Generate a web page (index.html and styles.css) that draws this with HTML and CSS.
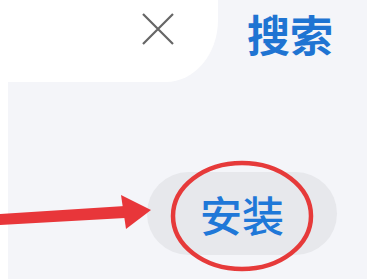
FILE: index.html
```html
<!DOCTYPE html>
<html lang="zh">
<head>
<meta charset="utf-8">
<link rel="stylesheet" href="styles.css">
</head>
<body>
<div class="page">
  <header class="topbar">
    <div class="field">
      <svg class="clear" width="34" height="34" viewBox="0 0 34 34">
        <path d="M2 2 L32 32 M32 2 L2 32" stroke="#666" stroke-width="2.2" fill="none"/>
      </svg>
    </div>
    <span class="search">搜索</span>
  </header>
  <section class="content">
    <button class="install">安装</button>
    <svg class="mark" width="367" height="197" viewBox="0 0 367 197">
      <ellipse cx="242" cy="134" rx="69" ry="53" fill="none" stroke="#e63a3a" stroke-width="4.5"/>
      <polygon points="0,132 125,124 125,136 0,143" fill="#e8363a"/>
      <polygon points="121,113 151,128 126,147" fill="#e8363a"/>
    </svg>
  </section>
</div>
</body>
</html>
```
FILE: styles.css
```css
html, body {
  margin: 0;
  padding: 0;
}
body {
  background: #f4f5f9;
  font-family: "Noto Sans CJK SC", "Noto Sans", sans-serif;
  width: 367px;
  height: 279px;
  overflow: hidden;
}
.page {
  display: flex;
  flex-direction: column;
  height: 279px;
}
.topbar {
  height: 82px;
  display: flex;
  align-items: flex-start;
}
.field {
  width: 218px;
  height: 142px;
  margin-top: -60px;
  background: #fff;
  border-radius: 0 52px 52px 0 / 0 62px 62px 0;
  display: flex;
  align-items: flex-end;
  justify-content: flex-end;
  padding: 0 43px 36px 0;
  box-sizing: border-box;
  flex-shrink: 0;
}
.clear {
  display: block;
}
.search {
  margin-top: 6px;
  margin-left: 29px;
  font-size: 43px;
  font-weight: bold;
  color: #1f74d2;
  line-height: 54px;
}
.content {
  flex: 1;
  border-left: 8px solid #fff;
  padding: 90px 0 0 139px;
  position: relative;
}
.install {
  width: 190px;
  height: 83px;
  border: none;
  border-radius: 42px;
  background: #e7e8ec;
  color: #1f78d8;
  font-family: "Noto Sans CJK SC", sans-serif;
  font-size: 42px;
  font-weight: 500;
  padding: 0;
  line-height: 83px;
}
.mark {
  position: absolute;
  left: 0;
  top: 0;
  margin-left: -8px;
  pointer-events: none;
}
```
